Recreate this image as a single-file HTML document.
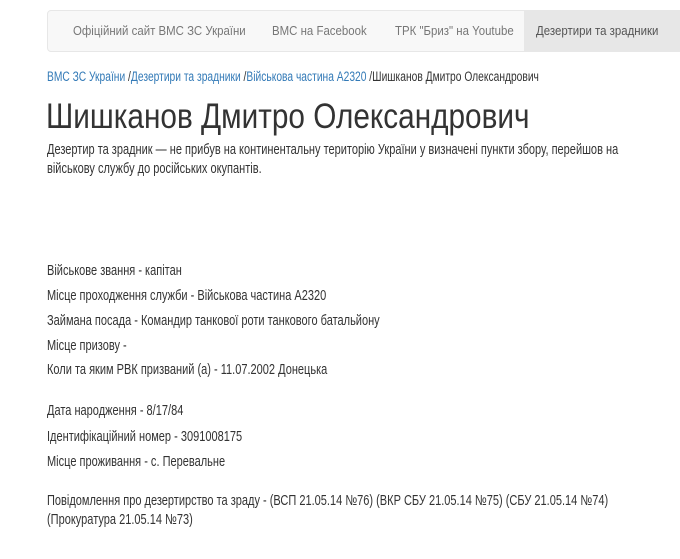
<!DOCTYPE html>
<html><head><meta charset="utf-8"><style>
body{margin:0;background:#fff;font-family:"Liberation Sans",Arial,sans-serif;color:#333;font-size:13px;width:680px;height:559px;overflow:hidden;position:relative}
.nav{position:absolute;left:47px;top:10px;width:660px;height:40px;background:#f8f8f8;border:1px solid #e7e7e7;border-radius:4px;overflow:hidden}
.nav span{position:absolute;top:0;line-height:40px;color:#777;font-size:13px;white-space:nowrap;transform:scaleX(.88);transform-origin:left}
.act{position:absolute;left:476px;top:0;width:200px;height:40px;background:#e7e7e7}
.t{position:absolute;left:47px;white-space:nowrap;transform:scaleX(.76);transform-origin:left}
.b{font-size:14.5px;transform:scaleX(.76)}
a{color:#337ab7;text-decoration:none}
h1{position:absolute;left:46px;top:97px;margin:0;font-weight:400;font-size:35px;line-height:40px;color:#333;white-space:nowrap;transform:scaleX(.85);transform-origin:left}
</style></head><body>
<div class="nav">
<div class="act"></div>
<span style="left:25px">Офіційний сайт ВМС ЗС України</span>
<span style="left:224px">ВМС на Facebook</span>
<span style="left:347px">ТРК "Бриз" на Youtube</span>
<span style="left:488px;color:#555">Дезертири та зрадники</span>
</div>
<div class="t" style="top:69px;font-size:13.5px"><a>ВМС ЗС України</a> /<a>Дезертири та зрадники</a> /<a>Військова частина А2320</a> /Шишканов Дмитро Олександрович</div>
<h1>Шишканов Дмитро Олександрович</h1>
<div class="t b" style="top:141px;line-height:19px">Дезертир та зрадник — не прибув на континентальну територію України у визначені пункти збору, перейшов на<br>військову службу до російських окупантів.</div>
<div class="t b" style="top:263px">Військове звання - капітан</div>
<div class="t b" style="top:288px">Місце проходження служби - Військова частина А2320</div>
<div class="t b" style="top:313px">Займана посада - Командир танкової роти танкового батальйону</div>
<div class="t b" style="top:338px">Місце призову -</div>
<div class="t b" style="top:362px">Коли та яким РВК призваний (а) - 11.07.2002 Донецька</div>
<div class="t b" style="top:403px">Дата народження - 8/17/84</div>
<div class="t b" style="top:429px">Ідентифікаційний номер - 3091008175</div>
<div class="t b" style="top:454px">Місце проживання - с. Перевальне</div>
<div class="t b" style="top:492px;line-height:19px">Повідомлення про дезертирство та зраду - (ВСП 21.05.14 №76) (ВКР СБУ 21.05.14 №75) (СБУ 21.05.14 №74)<br>(Прокуратура 21.05.14 №73)</div>
</body></html>
